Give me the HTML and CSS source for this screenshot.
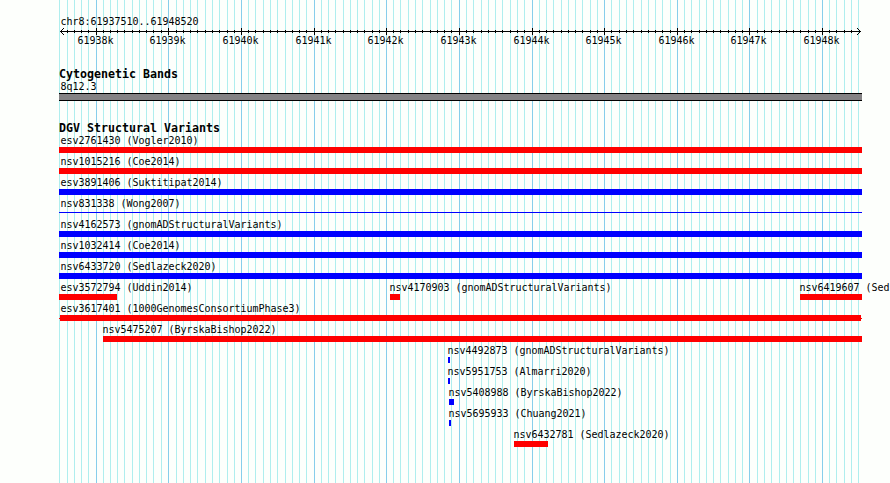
FILE: index.html
```
<!DOCTYPE html>
<html lang="en">
<head>
    <meta charset="UTF-8">
    <meta name="viewport" content="width=device-width, initial-scale=1.0">
    <title>chr8:61937510..61948520</title>
    <link rel="stylesheet" href="styles.css">
</head>
<body>
    <div class="browser">
        <svg class="grid" id="grid" width="803" height="483" shape-rendering="crispEdges"></svg>

        <!-- Ruler -->
        <div class="ruler">
            <div class="region">chr8:61937510..61948520</div>
            <svg class="scale" id="scale" width="803" height="7" shape-rendering="crispEdges">
                <path class="axis" d="M1 3h801v1H1z"/>
                <path class="axis" d="M2 2h1v3H2zM3 1h1v1H3zM3 5h1v1H3zM4 0h1v1H4zM4 6h1v1H4z"/>
                <path class="axis" d="M800 2h1v3h-1zM799 1h1v1h-1zM799 5h1v1h-1zM798 0h1v1h-1zM798 6h1v1h-1z"/>
            </svg>
            <div class="numbers" id="numbers"></div>
        </div>

        <!-- Cytogenetic bands -->
        <div class="track bands">
            <h2>Cytogenetic Bands</h2>
            <div class="band-name">8q12.3</div>
            <div class="band"></div>
        </div>

        <!-- Structural variants -->
        <div class="track variants">
            <h2>DGV Structural Variants</h2>
            <div id="rows"></div>
        </div>
    </div>

    <script>
        const LEFT = 59;

        // 100 bp grid lines, one list for each thousand
        const lines = [
            [59, 67, 74, 81, 88],
            [96, 103, 110, 117, 124, 132, 139, 146, 153, 161],
            [168, 176, 183, 190, 197, 205, 212, 219, 227, 234],
            [241, 248, 255, 263, 270, 277, 285, 292, 299, 306],
            [314, 321, 328, 335, 343, 350, 357, 364, 372, 379],
            [386, 393, 400, 408, 415, 422, 430, 437, 444, 451],
            [459, 466, 473, 481, 488, 495, 502, 510, 517, 524],
            [532, 539, 546, 553, 561, 568, 575, 582, 590, 597],
            [604, 611, 619, 626, 633, 641, 648, 655, 662, 670],
            [677, 684, 691, 699, 706, 713, 720, 728, 735, 742],
            [749, 757, 764, 771, 779, 786, 793, 800, 808, 815],
            [822, 829, 836, 844, 851, 858]
        ];

        // name, start, end, colour
        const rows = [
            [["esv2761430 (Vogler2010)", 59, 862, "gain"]],
            [["nsv1015216 (Coe2014)", 59, 862, "gain"]],
            [["esv3891406 (Suktitipat2014)", 59, 862, "loss"]],
            [["nsv831338 (Wong2007)", 59, 862, "loss thin"]],
            [["nsv4162573 (gnomADStructuralVariants)", 59, 862, "loss"]],
            [["nsv1032414 (Coe2014)", 59, 862, "loss"]],
            [["nsv6433720 (Sedlazeck2020)", 59, 862, "loss"]],
            [
                ["esv3572794 (Uddin2014)", 59, 117, "gain"],
                ["nsv4170903 (gnomADStructuralVariants)", 390, 400, "gain"],
                ["nsv6419607 (Sed", 800, 862, "gain"]
            ],
            [["esv3617401 (1000GenomesConsortiumPhase3)", 59, 862, "capped"]],
            [["nsv5475207 (ByrskaBishop2022)", 103, 862, "gain"]],
            [["nsv4492873 (gnomADStructuralVariants)", 448, 450, "loss"]],
            [["nsv5951753 (Almarri2020)", 448, 450, "loss"]],
            [["nsv5408988 (ByrskaBishop2022)", 449, 454, "loss"]],
            [["nsv5695933 (Chuang2021)", 449, 451, "loss"]],
            [["nsv6432781 (Sedlazeck2020)", 514, 548, "gain"]]
        ];

        function addRect(svg, cls, x, y, height) {
            const rect = document.createElementNS("http://www.w3.org/2000/svg", "rect");
            rect.setAttribute("class", cls);
            rect.setAttribute("x", x);
            rect.setAttribute("y", y);
            rect.setAttribute("width", 1);
            rect.setAttribute("height", height);
            svg.appendChild(rect);
        }

        function drawScale() {
            const grid = document.getElementById("grid");
            const scale = document.getElementById("scale");
            const numbers = document.getElementById("numbers");
            lines.forEach((group, k) => {
                group.forEach((x, i) => {
                    const major = k > 0 && i === 0;
                    addRect(grid, major ? "major" : "minor", x - LEFT, 0, 483);
                    if (major) {
                        addRect(scale, "axis", x - LEFT, 0, 7);
                    } else if (x > LEFT && x < 858) {
                        addRect(scale, "axis", x - LEFT, 2, 3);
                    }
                });
                if (k > 0) {
                    const number = document.createElement("span");
                    const previous = k > 1 ? lines[k - 1][0] + 17.6 : LEFT;
                    number.textContent = (61937 + k) + "k";
                    number.style.marginLeft = (group[0] - 18.4 - previous) + "px";
                    numbers.appendChild(number);
                }
            });
        }

        function drawRows() {
            const container = document.getElementById("rows");
            rows.forEach(features => {
                const row = document.createElement("div");
                row.className = "row";
                let end = LEFT;
                features.forEach(([name, from, to, type]) => {
                    const feature = document.createElement("div");
                    feature.className = "feature" + (from === LEFT ? " first" : "");
                    feature.style.marginLeft = (from - end) + "px";
                    feature.style.width = (to - from) + "px";

                    const label = document.createElement("div");
                    label.className = "label";
                    label.textContent = name;
                    const bar = document.createElement("div");
                    bar.className = "bar " + type;

                    feature.append(label, bar);
                    row.appendChild(feature);
                    end = to;
                });
                container.appendChild(row);
            });
        }

        drawScale();
        drawRows();
    </script>
</body>
</html>
```

FILE: styles.css
```
body {
    margin: 0;
    background-color: #fdfffc;
    color: #000;
    font-family: "DejaVu Sans Mono", monospace;
    font-size: 10px;
    line-height: 12px;
    letter-spacing: -0.02px;
}

.browser {
    position: relative;
    width: 803px;
    height: 483px;
    padding-left: 59px;
}

/* the grid lies behind all tracks */
.grid {
    position: absolute;
    top: 0;
    left: 59px;
    z-index: -1;
}

.minor {
    fill: #afeeee;
}

.major {
    fill: #87ceeb;
}

.axis {
    fill: #000;
}

.ruler {
    height: 52px;
    padding-top: 16px;
}

.region {
    height: 12px;
    padding-left: 1.5px;
}

.scale {
    display: block;
}

.numbers {
    display: flex;
}

.numbers span {
    flex: none;
    width: 36px;
}

h2 {
    margin: 0;
    font-size: 11.63px;
    line-height: 13px;
    letter-spacing: 0;
}

.bands {
    height: 54px;
}

.band-name {
    padding-left: 1.5px;
}

.band {
    height: 6px;
    border-top: 1px solid #000;
    border-bottom: 1px solid #000;
    background-color: #848284;
}

.row {
    display: flex;
    height: 21px;
}

.feature {
    flex: none;
}

.label {
    height: 12px;
    margin-left: -0.6px;
    white-space: nowrap;
}

.first .label {
    margin-left: 1.5px;
}

.bar {
    height: 6px;
}

.gain {
    background-color: #f00;
}

.loss {
    background-color: #00f;
}

.thin {
    height: 1px;
    margin-top: 2px;
}

/* full bar with a one pixel stub at each end */
.capped {
    background: linear-gradient(#f00, #f00) 1px 0 / 801px 6px no-repeat,
                linear-gradient(#f00, #f00) 0 3px / 803px 1px no-repeat;
}
```
